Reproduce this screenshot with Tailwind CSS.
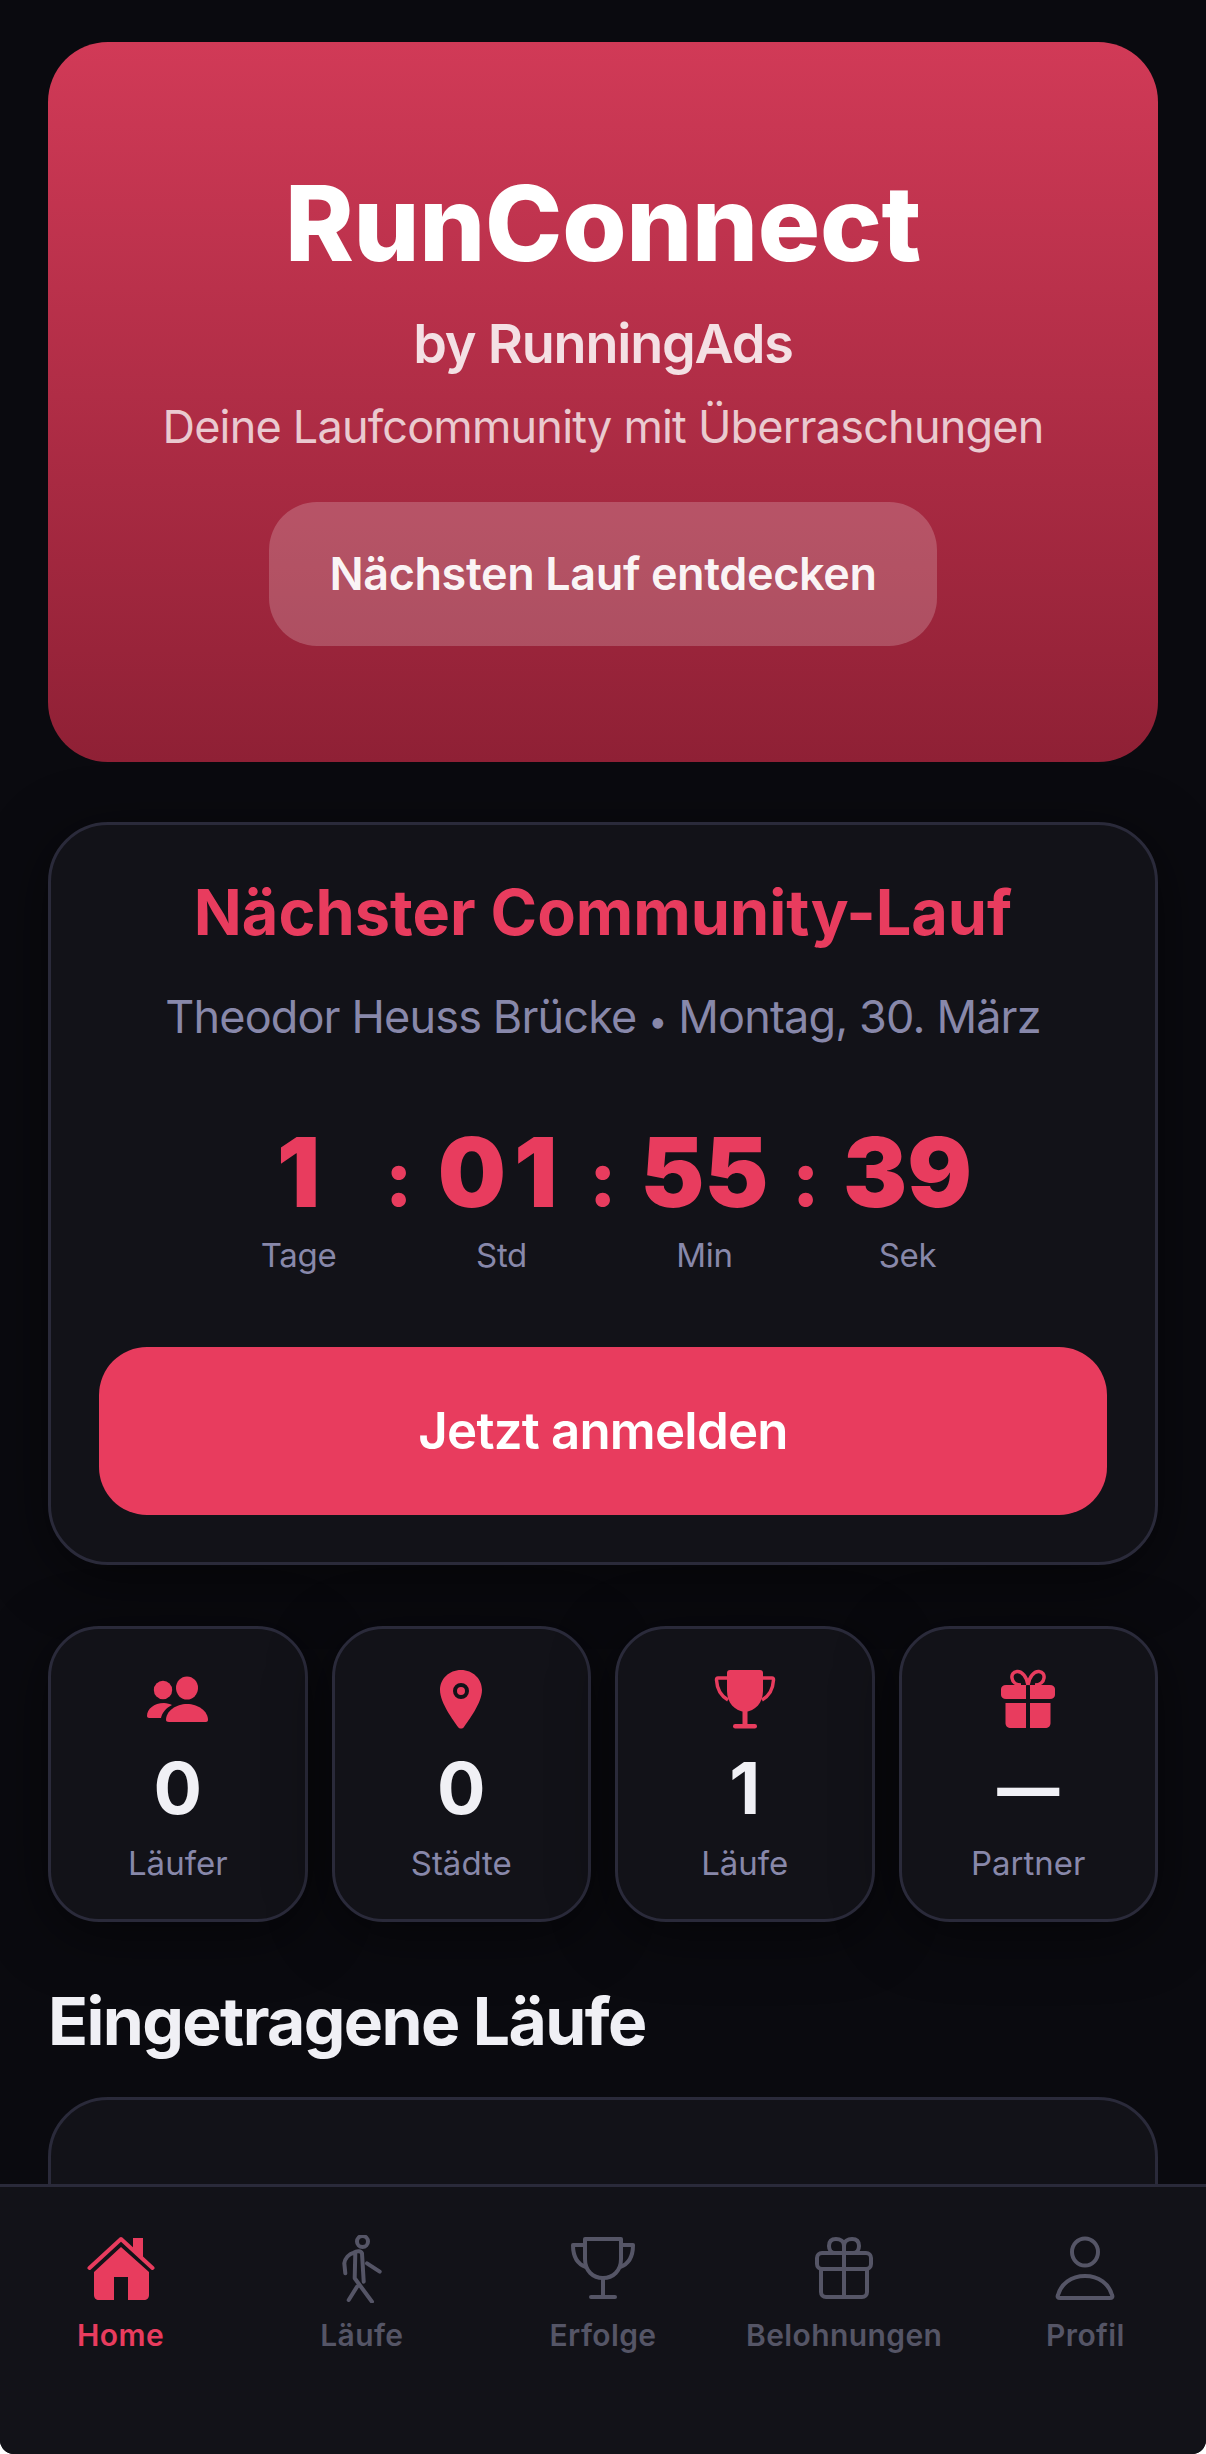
<!DOCTYPE html>
<html lang="de">
<head>
  <meta charset="UTF-8">
  <meta name="viewport" content="width=device-width, initial-scale=1.0">
  <title>RunConnect</title>
  <script src="https://cdn.jsdelivr.net/npm/@tailwindcss/browser@4"></script>
</head>
<body class="bg-white font-['Inter',sans-serif]">
  <div class="relative h-[2454px] w-[1206px] overflow-hidden rounded-b-[14px] bg-[#0a0a0f]">
    <main class="flex flex-col px-[48px] pt-[42px]">

      <section class="flex h-[720px] flex-col items-center rounded-[60px] bg-gradient-to-b from-[#d13a57] to-[#8f2035] pt-[119px]">
        <h1 class="text-[104px] leading-[124px] font-extrabold tracking-[-0.3px] text-white">RunConnect</h1>
        <p class="mt-[28px] text-[54px] leading-[62px] font-semibold tracking-[-1.2px] text-white/85">by RunningAds</p>
        <p class="mt-[25px] text-[45px] leading-[54px] tracking-[-0.8px] text-white/75">Deine Laufcommunity mit Überraschungen</p>
        <button class="mt-[48px] h-[144px] w-[668px] rounded-[48px] bg-white/20 text-[45px] font-semibold tracking-[-0.4px] text-white/95">Nächsten Lauf entdecken</button>
      </section>

      <section class="mt-[60px] flex h-[743px] flex-col items-center rounded-[60px] border-[3px] border-[#2a2a3a] bg-[#121218] px-[48px] pt-[50px] shadow-[0_12px_60px_rgba(0,0,0,0.5)]">
        <h2 class="text-[63px] leading-[74px] font-bold text-[#e83c5e]">Nächster Community-Lauf</h2>
        <p class="mt-[41px] h-[54px] text-[45px] leading-[54px] tracking-[-0.85px] text-[#8888aa]">Theodor Heuss Brücke <span class="text-[34px] leading-none">•</span> Montag, 30. März</p>
        <div class="mt-[70px] flex w-full justify-center">
          <div class="flex w-[203px] flex-col items-center">
            <span class="text-[96px] leading-[116px] font-black text-[#e83c5e]">1</span>
            <span class="mt-[5px] text-[33px] leading-[40px] tracking-[-0.3px] text-[#8888aa]">Tage</span>
          </div>
          <div class="flex w-[203px] flex-col items-center">
            <span class="text-[96px] leading-[116px] font-black tracking-[8px] text-[#e83c5e]">01</span>
            <span class="mt-[5px] text-[33px] leading-[40px] tracking-[-0.3px] text-[#8888aa]">Std</span>
          </div>
          <div class="flex w-[203px] flex-col items-center">
            <span class="text-[96px] leading-[116px] font-black text-[#e83c5e]">55</span>
            <span class="mt-[5px] text-[33px] leading-[40px] tracking-[-0.3px] text-[#8888aa]">Min</span>
          </div>
          <div class="flex w-[203px] flex-col items-center">
            <span class="text-[96px] leading-[116px] font-black text-[#e83c5e]">39</span>
            <span class="mt-[5px] text-[33px] leading-[40px] tracking-[-0.3px] text-[#8888aa]">Sek</span>
          </div>
        </div>
        <button class="mt-[72px] h-[168px] w-full shrink-0 rounded-[48px] bg-[#e83c5e] text-[51px] font-semibold tracking-[-0.8px] text-white">Jetzt anmelden</button>
      </section>

      <section class="mt-[61px] grid grid-cols-4 gap-[24px]">
        <div class="flex h-[296px] flex-col items-center rounded-[51px] border-[3px] border-[#2a2a3a] bg-[#121218] pt-[40px] shadow-[0_12px_60px_rgba(0,0,0,0.5)]">
          <svg class="h-[60px] w-[64px]" viewBox="0 0 64 60" fill="#e83c5e"><ellipse cx="41" cy="19" rx="11" ry="11.500"/><ellipse cx="17" cy="21" rx="9.200" ry="9.300"/><path d="M20 51C20 42 30 35 41 35C52 35 62 42 62 51C62 52 61 53 60 53H23C21 53 20 52 20 51Z"/><path d="M1 47C1 40 8 34 18 34C21 34 24 35 26 36C20 39 16 44 15 49H3C2 49 1 48 1 47Z"/></svg>
          <span class="mt-[16px] text-[72px] leading-[86px] font-bold text-[#f0f0f5]">0</span>
          <span class="mt-[12px] text-[33px] leading-[40px] text-[#8888aa]">Läufer</span>
        </div>
        <div class="flex h-[296px] flex-col items-center rounded-[51px] border-[3px] border-[#2a2a3a] bg-[#121218] pt-[40px] shadow-[0_12px_60px_rgba(0,0,0,0.5)]">
          <svg class="h-[60px] w-[64px]" viewBox="0 0 64 60"><path fill="#e83c5e" d="M32 1C20 1 11 10 11 21C11 34 25 52 29 58C30.500 60 33.500 60 35 58C39 52 53 34 53 21C53 10 44 1 32 1Z"/><circle cx="32" cy="22" r="6" fill="none" stroke="#121218" stroke-width="4"/></svg>
          <span class="mt-[16px] text-[72px] leading-[86px] font-bold text-[#f0f0f5]">0</span>
          <span class="mt-[12px] text-[33px] leading-[40px] text-[#8888aa]">Städte</span>
        </div>
        <div class="flex h-[296px] flex-col items-center rounded-[51px] border-[3px] border-[#2a2a3a] bg-[#121218] pt-[40px] shadow-[0_12px_60px_rgba(0,0,0,0.5)]">
          <svg class="h-[60px] w-[64px]" viewBox="0 0 64 60" fill="#e83c5e"><path d="M14 4C14 2 15 1 17 1H47C49 1 50 2 50 4V22C50 34 42 42 32 43C22 42 14 34 14 22Z"/><path fill="none" stroke="#e83c5e" stroke-width="3.500" d="M14 9H5C4 9 3.500 10 3.500 11C4 20 8 27 15 31M50 9H59C60 9 60.500 10 60.500 11C60 20 56 27 49 31"/><rect x="29.500" y="42" width="5" height="14"/><rect x="20" y="55" width="24" height="4.500" rx="2.200"/></svg>
          <span class="mt-[16px] text-[72px] leading-[86px] font-bold text-[#f0f0f5]">1</span>
          <span class="mt-[12px] text-[33px] leading-[40px] text-[#8888aa]">Läufe</span>
        </div>
        <div class="flex h-[296px] flex-col items-center rounded-[51px] border-[3px] border-[#2a2a3a] bg-[#121218] pt-[40px] shadow-[0_12px_60px_rgba(0,0,0,0.5)]">
          <svg class="h-[60px] w-[64px]" viewBox="0 0 64 60" fill="#e83c5e"><path d="M10 16H30V30H10C7 30 5 28 5 26V20C5 18 7 16 10 16Z"/><path d="M34 16H54C57 16 59 18 59 20V26C59 28 57 30 54 30H34Z"/><path d="M9.500 34H30V59H15C11.500 59 9.500 57 9.500 54Z"/><path d="M34 34H54.500V54C54.500 57 52.500 59 49 59H34Z"/><path fill="none" stroke="#e83c5e" stroke-width="3.500" d="M32 16C31 8 26 2 21 2.500C17 3 15.500 6 16 9C16.500 13 20 16 25 16M32 16C33 8 38 2 43 2.500C47 3 48.500 6 48 9C47.500 13 44 16 39 16"/></svg>
          <span class="mt-[16px] text-[62px] leading-[86px] font-extrabold text-[#f0f0f5]">—</span>
          <span class="mt-[12px] text-[33px] leading-[40px] text-[#8888aa]">Partner</span>
        </div>
      </section>

      <h2 class="mt-[59px] text-[66px] leading-[80px] font-bold tracking-[-1.6px] text-[#f0f0f5]">Eingetragene Läufe</h2>
      <div class="mt-[36px] h-[300px] rounded-[60px] border-[3px] border-[#2a2a3a] bg-[#121218]"></div>
    </main>

    <!-- colons sit over the countdown row -->
    <span class="absolute left-[385px] top-[1128px] text-[78px] leading-[100px] font-extrabold text-[#e83c5e]">:</span>
    <span class="absolute left-[589px] top-[1128px] text-[78px] leading-[100px] font-extrabold text-[#e83c5e]">:</span>
    <span class="absolute left-[792px] top-[1128px] text-[78px] leading-[100px] font-extrabold text-[#e83c5e]">:</span>

    <nav class="absolute inset-x-0 bottom-0 grid h-[270px] grid-cols-5 border-t-[3px] border-[#2a2a3a] bg-[#121218] pt-[48px]">
      <div class="flex flex-col items-center">
        <svg class="h-[68px] w-[68px]" viewBox="0 0 68 68"><path fill="#e83c5e" d="M34 12L62 37V60C62 63 60 65 57 65H41V42H27V65H12C9 65 7 63 7 60V37Z"/><path fill="#e83c5e" d="M46 3H56V23L46 14Z"/><path fill="none" stroke="#e83c5e" stroke-width="4" stroke-linecap="round" stroke-linejoin="round" d="M2.500 33L34 4L65.500 33"/></svg>
        <span class="mt-[14px] text-[30px] leading-[36px] font-semibold tracking-[0.4px] text-[#e83c5e]">Home</span>
      </div>
      <div class="flex flex-col items-center">
        <svg class="h-[68px] w-[68px]" viewBox="0 0 68 68" fill="none" stroke="#555566" stroke-width="4" stroke-linecap="round" stroke-linejoin="round"><circle cx="34.500" cy="6.500" r="5.500"/><path d="M17.300 38.300L16.300 28.300C17 23 21 19 25.700 17.700C29 15.500 33 16 34 18.300L35.700 46.700M27.300 18.300L26.700 43.300L44 66.700M29 51.700L20.700 65M39 28.300L51.700 36.700"/></svg>
        <span class="mt-[14px] text-[30px] leading-[36px] font-semibold tracking-[0.4px] text-[#555566]">Läufe</span>
      </div>
      <div class="flex flex-col items-center">
        <svg class="h-[68px] w-[68px]" viewBox="0 0 68 68" fill="none" stroke="#555566" stroke-width="4" stroke-linecap="round" stroke-linejoin="round"><path d="M16 4H52V24C52 36 44 43 34 43C24 43 16 36 16 24Z"/><path d="M16 10H4C4 22 8 29 17 32M52 10H64C64 22 60 29 51 32M34 43V62M22 62H46"/></svg>
        <span class="mt-[14px] text-[30px] leading-[36px] font-semibold tracking-[0.4px] text-[#555566]">Erfolge</span>
      </div>
      <div class="flex flex-col items-center">
        <svg class="h-[68px] w-[68px]" viewBox="0 0 68 68" fill="none" stroke="#555566" stroke-width="4" stroke-linecap="round" stroke-linejoin="round"><rect x="7" y="18" width="54" height="16" rx="5"/><path d="M11 34V57C11 60 13 62 16 62H52C55 62 57 60 57 57V34M34 18V62M34 18V11C34 6 30 4 26 4C21 4 19 7 19 11C19 15 21 18 25 18M34 11C34 6 38 4 42 4C47 4 49 7 49 11C49 15 47 18 43 18"/></svg>
        <span class="mt-[14px] text-[30px] leading-[36px] font-semibold tracking-[0.4px] text-[#555566]">Belohnungen</span>
      </div>
      <div class="flex flex-col items-center">
        <svg class="h-[68px] w-[68px]" viewBox="0 0 68 68" fill="none" stroke="#555566" stroke-width="4" stroke-linecap="round" stroke-linejoin="round"><ellipse cx="34" cy="17" rx="13" ry="13.500"/><path d="M9 63C7 63 6 62 7 60C10 49 20 41 34 41C48 41 58 49 61 60C62 62 61 63 59 63Z"/></svg>
        <span class="mt-[14px] text-[30px] leading-[36px] font-semibold tracking-[0.4px] text-[#555566]">Profil</span>
      </div>
    </nav>
  </div>
</body>
</html>
